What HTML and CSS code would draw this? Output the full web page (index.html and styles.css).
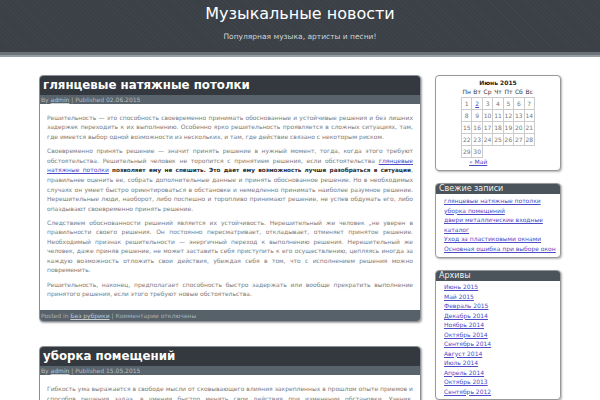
FILE: index.html
```html
<!DOCTYPE html>
<html lang="ru">
<head>
<meta charset="utf-8">
<title>Музыкальные новости</title>
<link rel="stylesheet" href="styles.css">
</head>
<body>
<header class="site-header">
  <h1 class="site-title">Музыкальные новости</h1>
  <p class="site-desc">Популярная музыка, артисты и песни!</p>
</header>
<div class="header-band"></div>
<div class="wrap">
  <main class="content">
    <article class="post">
      <h2 class="post-title">глянцевые натяжные потолки</h2>
      <div class="post-meta">By <a href="#">admin</a> | Published 02.06.2015</div>
      <div class="post-body">
        <p>Решительность — это способность своевременно принимать обоснованные и устойчивые решения и без лишних задержек переходить к их выполнению. Особенно ярко решительность проявляется в сложных ситуациях, там, где имеется выбор одной возможности из нескольких, и там, где действие связано с некоторым риском.</p>
        <p>Своевременно принять решение — значит принять решение в нужный момент, тогда, когда этого требуют обстоятельства. Решительный человек не торопится с принятием решения, если обстоятельства <a href="#">глянцевые натяжные потолки</a> <b>позволяет ему не спешить. Это дает ему возможность лучше разобраться в ситуации</b>, правильнее оценить ее, собрать дополнительные данные и принять обоснованное решение. Но в необходимых случаях он умеет быстро ориентироваться в обстановке и немедленно принимать наиболее разумное решение. Нерешительные люди, наоборот, либо поспешно и торопливо принимают решение, не успев обдумать его, либо опаздывают своевременно принять решение.</p>
        <p>Следствием обоснованности решений является их устойчивость. Нерешительный же человек „не уверен в правильности своего решения. Он постоянно пересматривает, откладывает, отменяет принятое решение. Необходимый признак решительности — энергичный переход к выполнению решения. Нерешительный же человек, даже приняв решение, не может заставить себя приступить к его осуществлению, цепляясь иногда за каждую возможность отложить свои действия, убеждая себя в том, что с исполнением решения можно повременить.</p>
        <p>Решительность, наконец, предполагает способность быстро задержать или вообще прекратить выполнение принятого решения, если этого требуют новые обстоятельства.</p>
      </div>
      <div class="post-foot">Posted in <a href="#">Без рубрики</a> | Комментарии отключены</div>
    </article>
    <article class="post">
      <h2 class="post-title">уборка помещений</h2>
      <div class="post-meta">By <a href="#">admin</a> | Published 15.05.2015</div>
      <div class="post-body">
        <p>Гибкость ума выражается в свободе мысли от сковывающего влияния закрепленных в прошлом опыте приемов и способов решения задач, в умении быстро менять свои действия при изменении обстановки. Ученик, обладающий гибкостью мышления, легко переходит от одного способа решения к другому, находит новые пути и подходы к решению задачи.</p>
      </div>
    </article>
  </main>
  <aside class="sidebar">
    <section class="widget calendar">
      <div class="cal-caption">Июнь 2015</div>
      <table class="cal-table">
        <thead>
          <tr><th>Пн</th><th>Вт</th><th>Ср</th><th>Чт</th><th>Пт</th><th>Сб</th><th>Вс</th></tr>
        </thead>
        <tbody>
          <tr><td>1</td><td><a href="#">2</a></td><td>3</td><td>4</td><td>5</td><td>6</td><td>7</td></tr>
          <tr><td>8</td><td>9</td><td>10</td><td>11</td><td>12</td><td>13</td><td>14</td></tr>
          <tr><td>15</td><td>16</td><td>17</td><td>18</td><td>19</td><td>20</td><td>21</td></tr>
          <tr><td>22</td><td>23</td><td>24</td><td>25</td><td>26</td><td>27</td><td>28</td></tr>
          <tr><td>29</td><td>30</td><td class="empty" colspan="5"></td></tr>
        </tbody>
      </table>
      <div class="cal-nav"><a href="#">« Май</a></div>
    </section>
    <section class="widget">
      <h3 class="widget-title">Свежие записи</h3>
      <ul class="widget-list">
        <li><a href="#">глянцевые натяжные потолки</a></li>
        <li><a href="#">уборка помещений</a></li>
        <li><a href="#">двери металлические входные каталог</a></li>
        <li><a href="#">Уход за пластиковыми окнами</a></li>
        <li><a href="#">Основная ошибка при выборе окон</a></li>
      </ul>
    </section>
    <section class="widget">
      <h3 class="widget-title">Архивы</h3>
      <ul class="widget-list archives">
        <li><a href="#">Июнь 2015</a></li>
        <li><a href="#">Май 2015</a></li>
        <li><a href="#">Февраль 2015</a></li>
        <li><a href="#">Декабрь 2014</a></li>
        <li><a href="#">Ноябрь 2014</a></li>
        <li><a href="#">Октябрь 2014</a></li>
        <li><a href="#">Сентябрь 2014</a></li>
        <li><a href="#">Август 2014</a></li>
        <li><a href="#">Июль 2014</a></li>
        <li><a href="#">Апрель 2014</a></li>
        <li><a href="#">Октябрь 2013</a></li>
        <li><a href="#">Сентябрь 2012</a></li>
      </ul>
    </section>
  </aside>
</div>
</body>
</html>
```

FILE: styles.css
```css
html, body {
  margin: 0;
  padding: 0;
  background: #fff;
  font-family: "DejaVu Sans", Verdana, sans-serif;
}

.site-header {
  background-color: #3a4046;
  background-image: repeating-linear-gradient(45deg, rgba(255,255,255,0.025) 0 1px, transparent 1px 3px);
  height: 52px;
  box-sizing: border-box;
  padding-top: 4px;
  text-align: center;
  color: #fff;
}

.site-title {
  margin: 0;
  font-size: 16px;
  line-height: 20px;
  font-weight: normal;
}

.site-desc {
  margin: 8px 0 0;
  font-size: 7.5px;
  line-height: 10px;
  color: #cfd3d6;
}

.header-band {
  height: 3px;
  background: #6a737a;
  border-bottom: 2px solid #979ea3;
}

.wrap {
  width: 522px;
  margin: 18px auto 0;
  display: flex;
  justify-content: space-between;
  align-items: flex-start;
}

.content {
  width: 382px;
}

.sidebar {
  width: 126px;
}

.post {
  border: 1px solid #8b9196;
  border-radius: 4px;
  box-shadow: 1px 1px 2px rgba(0,0,0,0.35);
  margin-bottom: 24px;
  background: #fff;
  overflow: hidden;
}

.post-title {
  margin: 0;
  background: #33393e;
  color: #fff;
  font-size: 11.8px;
  font-weight: bold;
  letter-spacing: 0;
  height: 19px;
  line-height: 19px;
  padding-left: 3px;
}

.post-meta {
  background: #58636c;
  color: #b4bcc1;
  font-size: 6px;
  height: 9px;
  line-height: 9px;
  padding-left: 1px;
}

.post-meta a,
.post-foot a {
  color: #c6ccd0;
}

.post-body {
  padding: 9px 7px 12px;
  color: #7a7a7a;
  font-size: 6px;
  line-height: 9.4px;
  text-align: justify;
}

.post-body p {
  margin: 0 0 5px;
}

.post-body p:last-child {
  margin-bottom: 0;
}

.post-body a {
  color: #4b4bc8;
}

.post-body b {
  color: #2a2a2a;
  font-size: 0.95em;
}

.post-foot {
  background: #56616a;
  color: #a9b1b7;
  font-size: 6px;
  height: 11px;
  line-height: 11px;
  padding-left: 1px;
}

.widget {
  border: 1px solid #999;
  border-radius: 4px;
  box-shadow: 1px 1px 2px rgba(0,0,0,0.3);
  margin-bottom: 12px;
  background: #fff;
  overflow: hidden;
}

.widget-title {
  margin: 0;
  background: #4b545a;
  color: #eef0f1;
  font-size: 8px;
  font-weight: normal;
  height: 10px;
  line-height: 10px;
  padding-left: 3px;
}

.calendar {
  padding: 2px 0 4px;
  color: #777;
  font-size: 6px;
}

.cal-caption {
  text-align: center;
  font-weight: bold;
  color: #222;
  line-height: 9px;
}

.cal-table {
  border-collapse: collapse;
  margin: 0 auto;
  width: 74px;
  font-size: 6px;
  table-layout: fixed;
}

.cal-table th {
  font-weight: normal;
  color: #333;
  height: 10px;
  line-height: 10px;
  padding: 0;
}

.cal-table td {
  border: 1px solid #ccc;
  height: 11px;
  padding: 0;
  text-align: center;
  line-height: 11px;
  color: #777;
}

.cal-table td.empty {
  border: none;
  border-top: 1px solid #ccc;
  border-left: 1px solid #ccc;
}

.cal-table a,
.cal-nav a {
  color: #4b4bc8;
}

.cal-nav {
  padding-left: 33px;
  line-height: 8px;
}

.widget-list {
  margin: 0;
  padding: 2px 4px 3px 8px;
  list-style: square;
  font-size: 6px;
  line-height: 9.6px;
  color: #333;
}

.widget-list.archives {
  line-height: 9.5px;
  padding-top: 1.5px;
}

.widget-list a {
  color: #4b4bc8;
}
```
